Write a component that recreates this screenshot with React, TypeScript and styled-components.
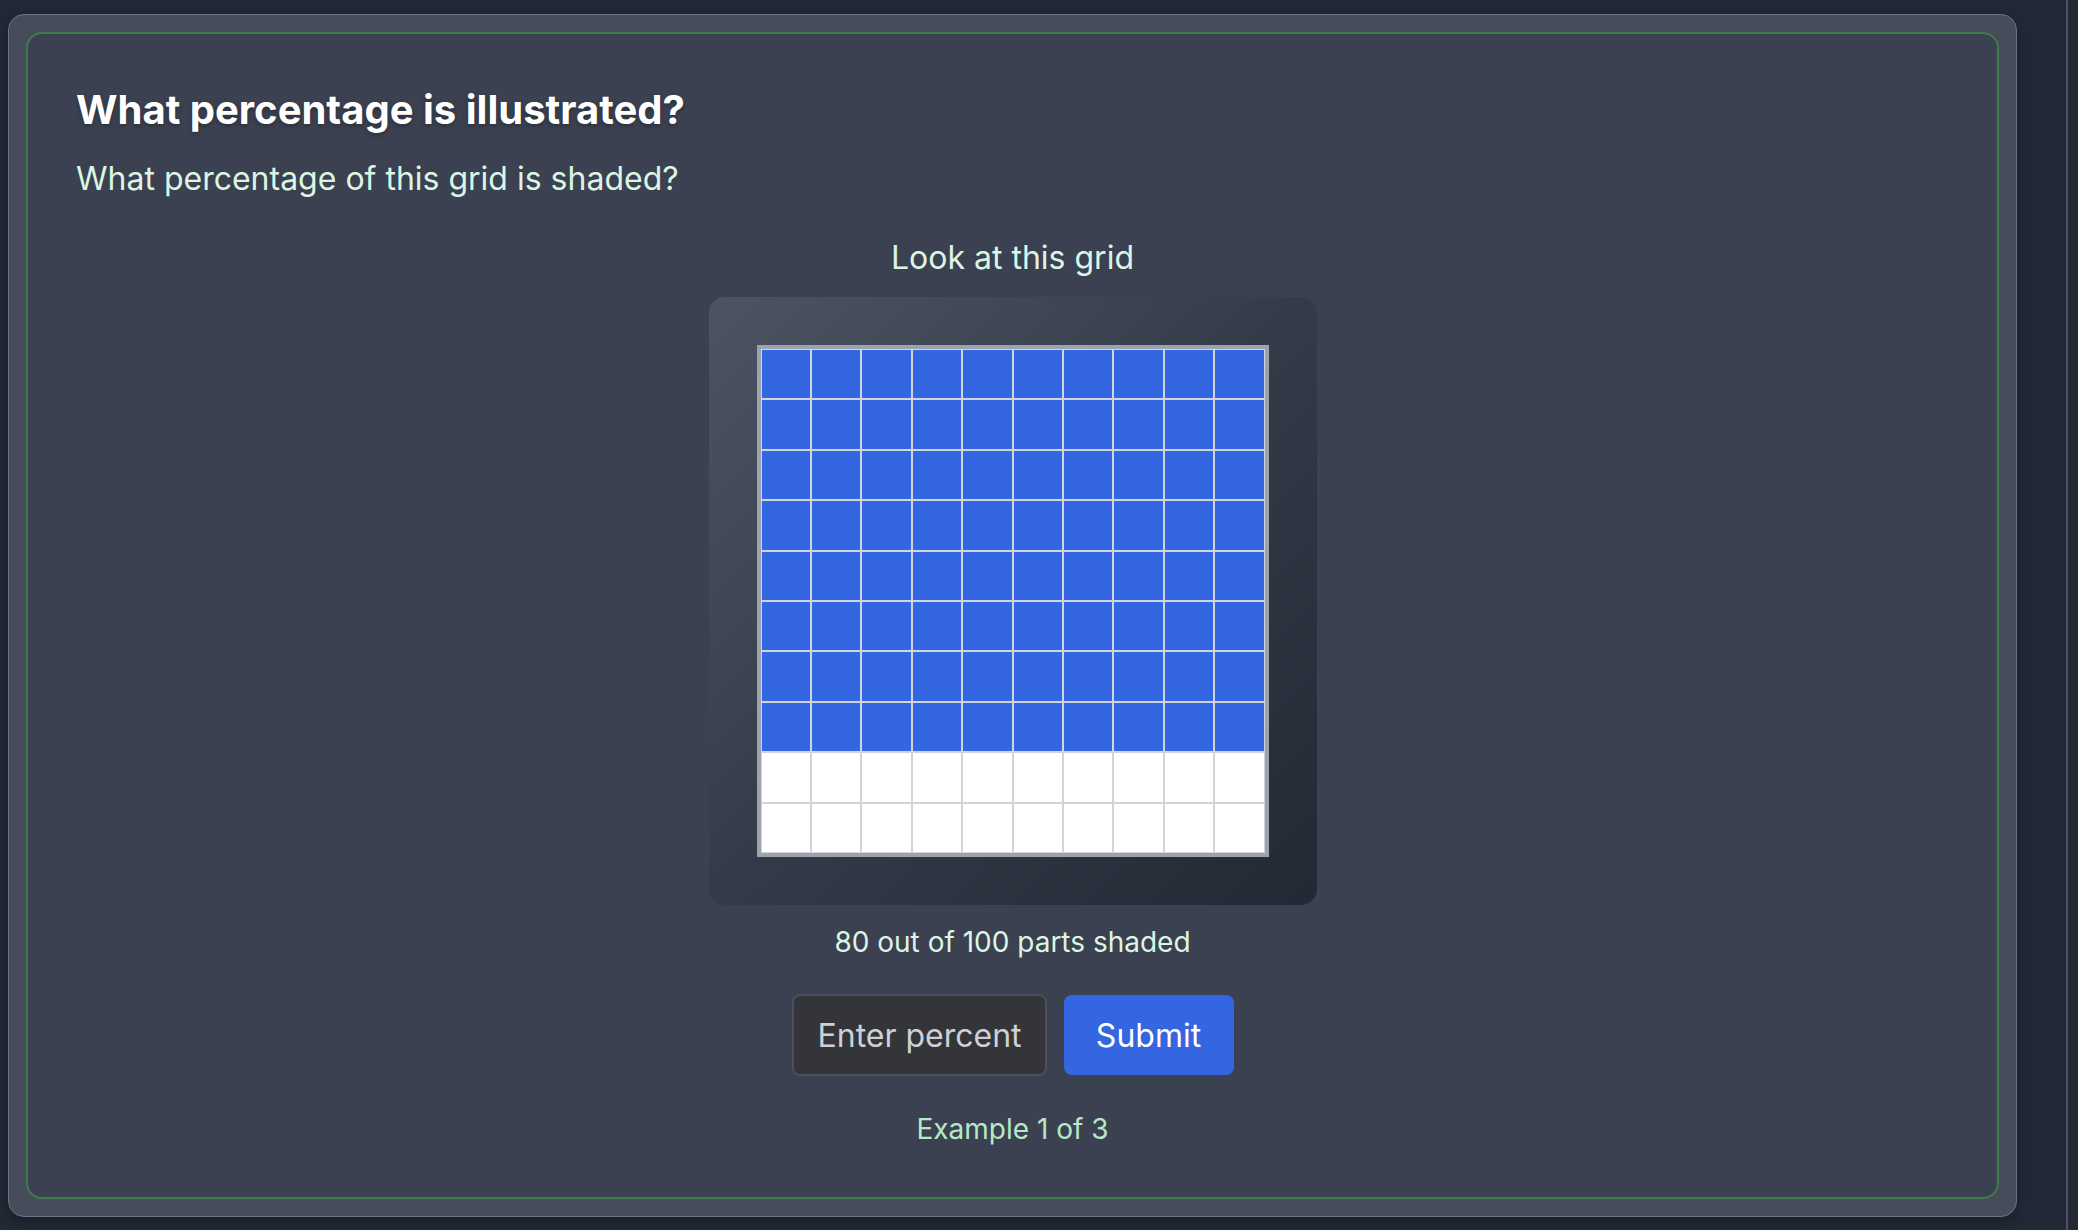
import React from "react";
import styled, { createGlobalStyle } from "styled-components";

const GlobalStyle = createGlobalStyle`
  html, body {
    margin: 0;
    padding: 0;
    background: #222835;
  }
  body {
    font-family: Inter, "Noto Sans", "Liberation Sans", sans-serif;
  }
  * { box-sizing: border-box; }
`;

const Page = styled.div`
  display: flex;
  width: 2078px;
  height: 1230px;
  background: #222835;
  overflow: hidden;
`;

const Main = styled.main`
  width: 2068px;
  padding: 14px 49px 13px 8px;
  border-right: 2px solid #4b5263;
`;

const OuterCard = styled.section`
  height: 1203px;
  background: #464c59;
  border: 1px solid #6b7280;
  border-radius: 16px;
  padding: 17px;
  box-shadow: 0 4px 14px rgba(0, 0, 0, 0.25);
`;

const InnerCard = styled.div`
  height: 100%;
  background: #3b4150;
  border: 2px solid #3f7b4c;
  border-radius: 16px;
  padding: 51px 48px 46px;
  display: flex;
  flex-direction: column;
`;

const Heading = styled.h2`
  margin: 0;
  font-size: 40px;
  line-height: 50px;
  font-weight: 700;
  color: #ffffff;
  text-shadow: 0 2px 4px rgba(0, 0, 0, 0.3);
`;

const Prompt = styled.p`
  margin: 20px 0 0;
  font-size: 32px;
  line-height: 48px;
  color: #dcf5e4;
`;

const Center = styled.div`
  display: flex;
  flex-direction: column;
  align-items: center;
`;

const Caption = styled.div<{ $gap: number; $size: number; $color: string }>`
  margin-top: ${(p) => p.$gap}px;
  font-size: ${(p) => p.$size}px;
  line-height: 1.5;
  color: ${(p) => p.$color};
`;

const GridFrame = styled.div`
  margin-top: 15px;
  width: 608px;
  height: 608px;
  padding: 48px;
  border-radius: 16px;
  background: linear-gradient(135deg, #4c5463 0%, #343b48 50%, #222834 100%);
`;

const Grid = styled.div`
  width: 512px;
  height: 512px;
  border: 4px solid #9ca3af;
  display: grid;
  grid-template-columns: repeat(10, 1fr);
  grid-template-rows: repeat(10, 1fr);
  background: #d1d5db;
`;

const Cell = styled.div<{ $filled: boolean }>`
  border: 1px solid #d1d5db;
  background: ${(p) => (p.$filled ? "#3366e0" : "#ffffff")};
`;

const AnswerRow = styled.form`
  margin-top: 31px;
  display: flex;
  align-items: center;
  gap: 17px;
`;

const PercentInput = styled.input`
  width: 255px;
  height: 82px;
  padding: 0 24px;
  background: #343539;
  border: 2px solid #4a5060;
  border-radius: 8px;
  color: #ffffff;
  font-family: inherit;
  font-size: 32px;
  outline: none;
  &::placeholder {
    color: #cfd0d6;
  }
`;

const SubmitButton = styled.button`
  width: 170px;
  height: 80px;
  background: #3366e0;
  color: #ffffff;
  border: none;
  border-radius: 8px;
  font-family: inherit;
  font-size: 32px;
  cursor: pointer;
`;

export default function App() {
  const cells = Array.from({ length: 100 }, (_, i) => i < 80);
  return (
    <>
      <GlobalStyle />
      <Page>
        <Main>
          <OuterCard>
            <InnerCard>
              <Heading>What percentage is illustrated?</Heading>
              <Prompt>What percentage of this grid is shaded?</Prompt>
              <Center>
                <Caption $gap={31} $size={32} $color="#dcf5e4">
                  Look at this grid
                </Caption>
                <GridFrame>
                  <Grid>
                    {cells.map((f, i) => (
                      <Cell key={i} $filled={f} />
                    ))}
                  </Grid>
                </GridFrame>
                <Caption $gap={16} $size={28} $color="#dcf5e4">
                  80 out of 100 parts shaded
                </Caption>
                <AnswerRow onSubmit={(e) => e.preventDefault()}>
                  <PercentInput placeholder="Enter percent" />
                  <SubmitButton type="submit">Submit</SubmitButton>
                </AnswerRow>
                <Caption $gap={32} $size={28} $color="#b5e8c7">
                  Example 1 of 3
                </Caption>
              </Center>
            </InnerCard>
          </OuterCard>
        </Main>
      </Page>
    </>
  );
}
